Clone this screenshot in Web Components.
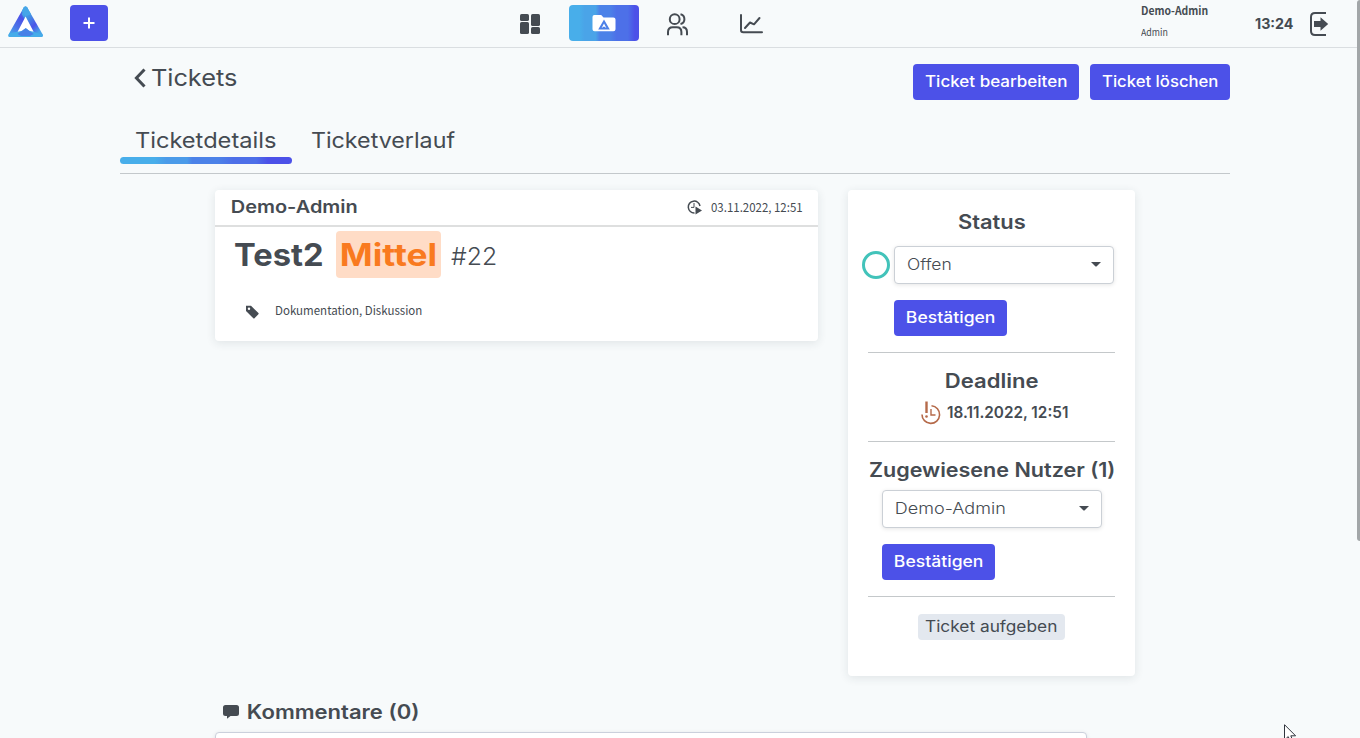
<!DOCTYPE html>
<html lang="de">
<head>
<meta charset="utf-8">
<title>Tickets</title>
<style>
html,body{margin:0;height:100%;overflow:hidden;background:#f7fafb}
body{font-family:Inter,"Liberation Sans",sans-serif;color:#454b52}
</style>
</head>
<body>
<ticket-app></ticket-app>
<script>
const define = (name, html, setup) => {
  const t = document.createElement('template');
  t.innerHTML = html;
  customElements.define(name, class extends HTMLElement {
    connectedCallback() {
      if (this.shadowRoot) return;
      this.attachShadow({mode: 'open'}).append(t.content.cloneNode(true));
      if (setup) setup(this, this.shadowRoot);
    }
  });
};

/* Label whose glyphs are stretched to a given ink width */
define('ui-text', `<style>
:host{display:block;flex:none;white-space:nowrap;line-height:var(--lh,20px);height:var(--lh,20px)}
span{display:inline-block;transform-origin:0 50%}
</style><span><slot></slot></span>`, (el, root) => {
  const w = +el.getAttribute('w');
  el.style.fontSize = el.getAttribute('size') + 'px';
  el.style.fontWeight = el.getAttribute('weight') || 400;
  if (el.hasAttribute('narrow')) el.style.fontFamily = '"Noto Sans CJK SC","Noto Sans",sans-serif';
  el.style.width = w + 'px';
  const cs = getComputedStyle(el);
  const c = document.createElement('canvas').getContext('2d');
  c.font = `${cs.fontWeight} ${cs.fontSize} ${cs.fontFamily}`;
  const m = c.measureText(el.textContent);
  const k = w / (m.actualBoundingBoxLeft + m.actualBoundingBoxRight);
  root.querySelector('span').style.transform = `translateX(${m.actualBoundingBoxLeft * k}px) scaleX(${k})`;
});

define('ui-button', `<style>
:host{display:flex;flex:none;align-items:center;justify-content:center;box-sizing:border-box;height:36px;padding:0 12px 1px;border-radius:4px;background:#4c51e8;color:#fff}
</style><slot></slot>`);

define('ui-select', `<style>
:host{display:flex;align-items:center;justify-content:space-between;box-sizing:border-box;width:220px;height:38px;padding:0 12px 1px 12px;border:1px solid #cbd0d6;border-radius:4px;background:#fff;box-shadow:0 1px 4px rgba(0,0,0,.1)}
svg{display:block}
</style><slot></slot><svg width="10" height="5"><path d="M0 0H10L6 4Q5 5 4 4Z" fill="#454b52"/></svg>`);

define('ui-card', `<style>
:host{display:block;box-sizing:border-box;background:#fff;border-radius:4px;box-shadow:0 2px 10px rgba(40,55,65,.11)}
</style><slot></slot>`);

define('app-logo', `<style>:host{display:block;width:36px;height:33px}svg{display:block}</style>
<svg width="36" height="33" viewBox="0 0 36 33">
<defs><linearGradient id="l" x1=".75" y1=".05" x2=".15" y2="1"><stop offset="0" stop-color="#4299e1"/><stop offset=".3" stop-color="#4c51e8"/><stop offset=".62" stop-color="#4c72e8"/><stop offset="1" stop-color="#46aeea"/></linearGradient>
<linearGradient id="r" x1=".2" y1="0" x2=".9" y2="1"><stop offset="0" stop-color="#46aeea"/><stop offset=".3" stop-color="#438fe4"/><stop offset=".6" stop-color="#4c55e8"/><stop offset=".85" stop-color="#46a4e8"/></linearGradient></defs>
<path d="M15.8 1.6Q17.5-.8 19.2 1.6L21 6L10.5 26L8 31H1.8Q-.4 31 .5 28.4Z" fill="url(#l)"/>
<path d="M15.8 1.6Q17.5-.8 19.2 1.6L34.7 28.4Q35.6 31 33 31H27L14 8.5Z" fill="url(#r)"/>
<path d="M13.8 5L15.8 1.6Q17.5-.8 19.2 1.6L23 8.2L17.4 10.2Z" fill="#46a6e8"/>
<path d="M1 27.5L10 25.5L18 22L26 26L34.6 28.4Q35.3 31 33 31H2Q0 31 1 27.5Z" fill="#46ace9"/>
<path d="M17.6 10.6L25.6 25.8L21 24.8L17.7 21.8L14.3 24.8L9.6 25.8Z" fill="#fff"/>
<path d="M9.5 28L17.7 22.2L25.8 28L22 30H13Z" fill="#4881e7"/>
</svg>`);

define('app-header', `<style>
:host{display:grid;grid-template-columns:62px 450px 49px 98px 73px 401px 114px 54px 1fr;grid-template-rows:46px;align-items:center;box-sizing:border-box;width:1357px;height:48px;padding:0 0 1px 8px;border-bottom:1px solid #dadee1}
svg{display:block}
.icon{margin-top:2px}
app-logo{margin-top:-1px}
ui-button{width:38px;padding:0}
.active{display:flex;align-items:center;justify-content:center;width:70px;height:36px;border-radius:4px;background:linear-gradient(90deg,#48aeea 0 15%,#4aa4e8 22% 38%,#4c82e8 44% 58%,#4d70e8 68% 84%,#4c51e8 94%)}
.user{display:flex;flex-direction:column;--lh:22px;height:44px;align-self:start;margin-top:-1px}
</style>
<app-logo></app-logo>
<ui-button><svg width="12" height="12"><path d="M6 .5V11.5M.5 6H11.5" stroke="#fff" stroke-width="2"/></svg></ui-button>
<svg class="icon" width="20" height="20" fill="#454b52"><rect width="9" height="7" rx="1.6"/><rect y="8" width="9" height="12" rx="1.6"/><rect x="11" width="9" height="12" rx="1.6"/><rect x="11" y="13" width="9" height="7" rx="1.6"/></svg>
<div class="active"><svg width="24" height="18"><path d="M2.4 1H9.2L11.5 3.5H21.4Q23.5 3.5 23.5 5.6V15.2Q23.5 17.3 21.4 17.3H2.6Q.5 17.3 .5 15.2V3Q.5 1 2.4 1Z" fill="#fff"/><path d="M12 5.6L17.8 15.4H6.2ZM12 9.5L9.6 14L12 12.6L14.4 14Z" fill="#4c80e8" fill-rule="evenodd"/></svg></div>
<svg class="icon" width="23" height="23" fill="none" stroke="#454b52" stroke-width="2"><circle cx="7.7" cy="6.2" r="4.9"/><path d="M1 22.2V19Q1 14.2 5.8 14.2H9.7Q14.4 14.2 14.4 19V22.2M13.5 1.2Q17.4 2 17.4 6.2Q17.4 10 13.5 11M15.5 14.2Q20 14.2 20 19V22.2"/></svg>
<svg class="icon" width="24" height="20" fill="none" stroke="#454b52" stroke-width="2" stroke-linecap="round" stroke-linejoin="round"><path d="M1 1V15.9Q1 18.2 3.3 18.2H22M5 14L10 8.5L14 10.3L19.5 4"/></svg>
<div class="user"><ui-text narrow w="66" size="11.2" weight="700" style="margin-left:.5px">Demo-Admin</ui-text><ui-text narrow w="27" size="9.6">Admin</ui-text></div>
<ui-text w="38" size="14" weight="700" style="margin-top:2px">13:24</ui-text>
<svg width="20" height="24" fill="none" stroke="#454b52" stroke-width="2" style="margin-top:1px"><path d="M17 1H6Q2 1 2 5V19Q2 23 6 23H17"/><path d="M5 9H11.5V5.2L19.2 12L11.5 18.8V15H5Z" fill="#454b52" stroke="none"/></svg>`);

define('page-head', `<style>
:host{display:flex;align-items:flex-start;height:69px;padding-top:16px;box-sizing:border-box}
.back{display:flex;align-items:center;height:27px;padding-left:14px;flex:1;gap:6px}
.actions{display:flex;gap:11px}
.actions ui-text{margin:0 .5px 0 -.5px}
svg{display:block}
</style>
<div class="back"><svg width="12" height="20"><path d="M10.5 1.5L2.4 10L10.5 18.5" fill="none" stroke="#454b52" stroke-width="3"/></svg><ui-text w="85" size="23.4">Tickets</ui-text></div>
<div class="actions"><ui-button><ui-text w="142" size="15.6" weight="500">Ticket bearbeiten</ui-text></ui-button><ui-button><ui-text w="116" size="15.6" weight="500">Ticket löschen</ui-text></ui-button></div>`);

define('page-tabs', `<style>
:host{display:flex;gap:4px;height:57px;box-sizing:border-box;border-bottom:1px solid #c3c8cb;padding-top:8px;--lh:30px}
.tab{padding:0 16px;height:32px}
.tab i{display:block;height:7px;margin:2px -16px 0;border-radius:4px;background:linear-gradient(90deg,#48aeea 0 20%,#4b9be9 27% 39%,#4c82e8 42% 57%,#4d6fe8 66% 79%,#4c51e8 86%)}
</style>
<div class="tab"><ui-text w="140" size="21.6">Ticketdetails</ui-text><i></i></div>
<div class="tab"><ui-text w="143" size="21.6">Ticketverlauf</ui-text></div>`);

define('ticket-card', `<style>
ui-card{width:603px;height:151px}
.top{display:flex;align-items:center;height:35px;padding:0 16px 0 17.3px;border-bottom:2px solid #dedfdf}
.who{flex:1;padding-bottom:2px}
.date{display:flex;align-items:center;gap:9px}
.date svg{margin-top:-1px}
.date ui-text{padding-bottom:1px}
.title{display:flex;align-items:center;padding:4px 20px 0;height:47px}
.badge{display:flex;align-items:center;box-sizing:border-box;width:105px;height:47px;padding:0 0 0 5.8px;margin:0 10px 0 14px;border-radius:4px;background:#ffdcc6;color:#f97a1f;--lh:47px}
.title>ui-text{--lh:47px}
.title>.num{--lh:51px;padding-top:4px;margin-left:-.5px}
.tags{display:flex;align-items:center;gap:17px;padding:22px 30px 0;height:20px}
svg{display:block}
.tags svg{margin-top:3px}
</style><ui-card>
<div class="top"><div class="who"><ui-text w="125" size="17.4" weight="600">Demo-Admin</ui-text></div>
<div class="date"><svg width="15" height="15" fill="none" stroke="#454b52"><path d="M13 6A5.9 5.9 0 1 0 7.5 12.9" stroke-width="1.5"/><path d="M7 3V7.4H4"/><path d="M8.5 6.5V14.5L15 10.5Z" fill="#454b52" stroke="none"/></svg><ui-text narrow w="91" size="12">03.11.2022, 12:51</ui-text></div></div>
<div class="title"><ui-text w="87" size="31" weight="700">Test2</ui-text><div class="badge"><ui-text w="93.5" size="31" weight="700">Mittel</ui-text></div><ui-text class="num" w="45" size="24.6" weight="300">#22</ui-text></div>
<div class="tags"><svg width="14" height="14"><path d="M1 .8H6L13.4 8Q14 8.6 13.4 9.2L9.5 13.2Q9 13.8 8.3 13.2L1 6Z" fill="#454b52"/><circle cx="4" cy="3.8" r="1.2" fill="#fff"/></svg><ui-text narrow w="146" size="12">Dokumentation, Diskussion</ui-text></div>
</ui-card>`);

define('status-card', `<style>
ui-card{width:287px;height:486px;padding:20px 20px 0;display:flex;flex-direction:column;align-items:center}
hr{width:247px;height:1px;border:0;margin:16px 0;background:#c4c8ca;flex:none}
.h{--lh:24px}
.row{display:flex;align-items:center;gap:4px;margin:12px -6px 16px 0;padding-right:7px;align-self:flex-end}
.ring{width:22px;height:22px;border:3px solid #42c3ba;border-radius:50%;flex:none;margin-top:-1px}
.b1{align-self:flex-start;margin-left:26px}
.b2{align-self:flex-start;margin-left:14px}
ui-button ui-text{margin-left:1px}
.due{display:flex;align-items:center;gap:6px;height:24px;margin:8px 0 0 5px}
.due ui-text{padding-bottom:1px}
.drop{padding:4px 8px 5px;border-radius:4px;background:#e3e8ef;--lh:17px;margin-top:1px}
.drop ui-text{margin:0 .7px 0 -.7px}
svg{display:block}
</style><ui-card>
<ui-text class="h" w="67" size="19.4" weight="600">Status</ui-text>
<div class="row"><div class="ring"></div><ui-select><ui-text w="43.5" size="15.5" weight="300">Offen</ui-text></ui-select></div>
<ui-button class="b1"><ui-text w="88" size="15.6" weight="500">Bestätigen</ui-text></ui-button>
<hr>
<ui-text class="h" w="92" size="19.4" weight="600" style="margin-left:1.5px">Deadline</ui-text>
<div class="due"><svg width="20" height="24" fill="none" stroke="#b56a4a"><path d="M5.5 .5V12" stroke-width="2.4"/><circle cx="5.5" cy="15.5" r="1.3" fill="#b56a4a" stroke="none"/><path d="M10.5 4.8A8.8 8.8 0 1 1 1 13.5" stroke-width="1.6"/><path d="M10 8V14H14.5" stroke-width="1.4"/></svg><ui-text w="121" size="15.8" weight="600">18.11.2022, 12:51</ui-text></div>
<hr>
<ui-text class="h" w="244" size="19.4" weight="600">Zugewiesene Nutzer (1)</ui-text>
<ui-select style="margin:8px 0 16px"><ui-text w="108.5" size="15.5" weight="300" style="margin-left:1px">Demo-Admin</ui-text></ui-select>
<ui-button class="b2"><ui-text w="88" size="15.6" weight="500">Bestätigen</ui-text></ui-button>
<hr>
<div class="drop"><ui-text w="131" size="15.6">Ticket aufgeben</ui-text></div>
</ui-card>`);

define('comment-box', `<style>
:host{display:block;width:872px}
.h{display:flex;align-items:center;gap:9px;height:24px;padding-left:8px;--lh:24px}
.in{height:100px;margin-top:8px;border:1px solid #cbd0dc;border-radius:4px;background:#fff;box-sizing:border-box;box-shadow:0 1px 4px rgba(0,0,0,.1)}
</style><div class="h"><svg width="16" height="14"><path d="M2.5 0H13.5Q16 0 16 2.5V8.5Q16 11 13.5 11H7.5L4 13.8V11H2.5Q0 11 0 8.5V2.5Q0 0 2.5 0Z" fill="#454b52"/></svg><ui-text w="170" size="19.4" weight="600">Kommentare (0)</ui-text></div><div class="in"></div>`);

define('ticket-app', `<style>
:host{display:block;height:738px;overflow:hidden;position:relative;background:#f7fafb}
main{width:1110px;margin-left:120px}
.cols{display:flex;align-items:flex-start;gap:30px;padding:16px 0 0 95px}
comment-box{margin:24px 0 0 95px}
.bar{position:absolute;right:0;top:0;width:3px;height:541px;border-radius:3px 0 0 3px;background:#a2a6a8}
.cursor{position:absolute;left:1284px;top:724px}
</style>
<app-header></app-header>
<main><page-head></page-head><page-tabs></page-tabs>
<div class="cols"><ticket-card></ticket-card><status-card></status-card></div>
<comment-box></comment-box></main>
<div class="bar"></div>
<svg class="cursor" width="13" height="19"><path d="M.5 .7V16L4.2 12.6L6.6 18L9 17L6.8 11.8H11.6Z" fill="#fff" stroke="#30343d"/></svg>`);
</script>
</body>
</html>
